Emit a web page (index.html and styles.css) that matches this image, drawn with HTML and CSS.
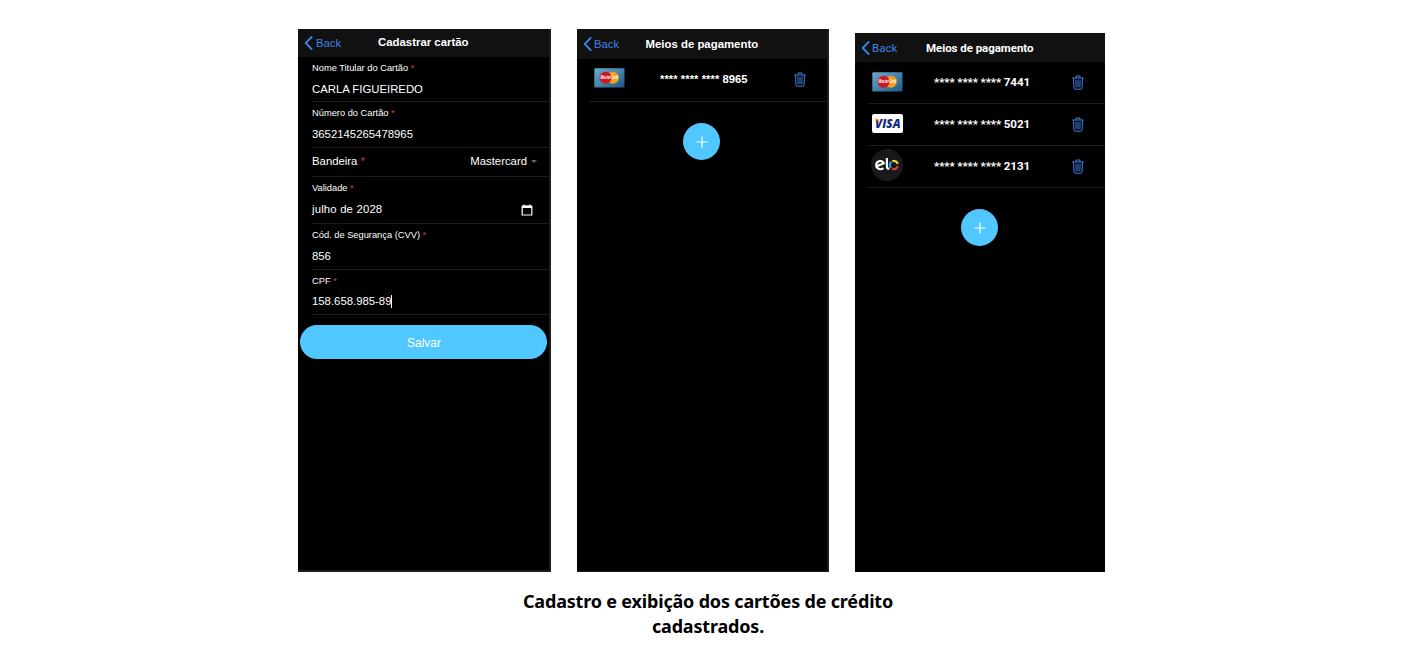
FILE: index.html
```html
<!DOCTYPE html>
<html lang="pt-BR">
<head>
<meta charset="utf-8">
<title>Cadastro de cartões</title>
<link rel="stylesheet" href="styles.css">
</head>
<body>
<svg class="defs" width="0" height="0" aria-hidden="true">
  <defs>
    <linearGradient id="card-blue" x1="0" y1="0" x2="1" y2="1">
      <stop offset="0" stop-color="#6aa9cb"/>
      <stop offset="0.5" stop-color="#4584ac"/>
      <stop offset="1" stop-color="#1f587f"/>
    </linearGradient>
    <symbol id="chevron" viewBox="0 0 9 14"><path d="M7.6 1 L1.7 7 L7.6 13" fill="none" stroke="#3f82e6" stroke-width="1.8" stroke-linecap="round" stroke-linejoin="round"/></symbol>
    <symbol id="trash" viewBox="0 0 12 15"><path d="M0.3 3 H11.7 M4 3 V1 H8 V3 M1.4 3 L2 13 Q2.1 14.2 3.3 14.2 H8.7 Q9.9 14.2 10 13 L10.6 3 M3.9 4.6 L4.1 12.4 M6 4.6 V12.4 M8.1 4.6 L7.9 12.4" fill="none" stroke="#3f7de0" stroke-width="1" stroke-linejoin="round"/></symbol>
    <symbol id="plus" viewBox="0 0 12 12"><path d="M6 0.5 V11.5 M0.5 6 H11.5" fill="none" stroke="#fff" stroke-width="1.2"/></symbol>
    <symbol id="mastercard" viewBox="0 0 31 20">
      <rect x="0.3" y="0.3" width="30.2" height="19.2" rx="1.2" fill="url(#card-blue)"/>
      <circle cx="18.8" cy="9.7" r="6" fill="#f6a01f"/>
      <circle cx="11.6" cy="9.7" r="6" fill="#cf1820"/>
      <text x="15.2" y="11.3" text-anchor="middle" textLength="17.5" lengthAdjust="spacingAndGlyphs" class="mc-word">MasterCard</text>
    </symbol>
    <symbol id="elo" viewBox="0 0 32 32">
      <circle cx="16" cy="16" r="16" fill="#19191c"/>
      <g fill="none" stroke-width="2.2">
        <path d="M5.2 17.4 L12.9 14.2 A4.1 4.1 0 1 0 12.3 18.9" stroke="#fff" stroke-linejoin="round"/>
        <path d="M15.9 9 V17.8 Q16 20 18.2 19.6" stroke="#fff"/>
        <path d="M20.1 19 A4.1 4.1 0 0 1 20.3 12.8" stroke="#28a3df"/>
        <path d="M21.2 12.2 A4.1 4.1 0 0 1 26.8 15" stroke="#f4d02b"/>
        <path d="M26.8 17 A4.1 4.1 0 0 1 21.3 19.8" stroke="#e13b34"/>
      </g>
    </symbol>
  </defs>
</svg>
<main class="board">
  <div class="phones">
    <section class="phone phone-form">
      <header class="bar"><a class="back"><svg class="chev"><use href="#chevron"/></svg><span>Back</span></a><h2 class="title">Cadastrar cartão</h2></header>
      <div class="fields">
        <div class="field f1"><label>Nome Titular do Cartão <i>*</i></label><p>CARLA FIGUEIREDO</p></div>
        <div class="field f2"><label>Número do Cartão <i>*</i></label><p>3652145265478965</p></div>
        <div class="field select"><p>Bandeira <i>*</i></p><p class="choice">Mastercard<span class="caret"></span></p></div>
        <div class="field f4"><label>Validade <i>*</i></label><p class="date">julho de 2028</p>
          <svg class="cal" viewBox="0 0 12 12"><path d="M1.2 2.4 H10.8 V11 H1.2 Z" fill="none" stroke="#fff" stroke-width="1.2"/><path d="M1 1.6 H11 V4 H1 Z M2.6 0.4 H3.8 V2 H2.6 Z M8.2 0.4 H9.4 V2 H8.2 Z" fill="#fff"/></svg></div>
        <div class="field f5"><label>Cód. de Segurança (CVV) <i>*</i></label><p>856</p></div>
        <div class="field f6"><label>CPF <i>*</i></label><p class="typing">158.658.985-89<span class="cursor"></span></p></div>
      </div>
      <button class="save">Salvar</button>
    </section>
    <section class="phone phone-one">
      <header class="bar"><a class="back"><svg class="chev"><use href="#chevron"/></svg><span>Back</span></a><h2 class="title">Meios de pagamento</h2></header>
      <div class="cards">
        <div class="card"><span class="brand"><svg class="mc"><use href="#mastercard"/></svg></span><span class="num"><span class="stars">**** **** ****</span><span class="digits">8965</span></span><svg class="trash"><use href="#trash"/></svg></div>
      </div>
      <button class="add"><svg><use href="#plus"/></svg></button>
    </section>
    <section class="phone phone-many">
      <header class="bar"><a class="back"><svg class="chev"><use href="#chevron"/></svg><span>Back</span></a><h2 class="title">Meios de pagamento</h2></header>
      <div class="cards">
        <div class="card"><span class="brand"><svg class="mc"><use href="#mastercard"/></svg></span><span class="num"><span class="stars">**** **** ****</span><span class="digits">7441</span></span><svg class="trash"><use href="#trash"/></svg></div>
        <div class="card"><span class="brand"><svg class="visa" viewBox="0 0 31 19"><rect width="31" height="19" rx="2" fill="#fff"/><text x="3" y="13.8" textLength="25.5" lengthAdjust="spacingAndGlyphs">VISA</text><path d="M2.6 4.8 H6.6 L7.6 8.6 Q5.6 6 2.6 5.2 Z" fill="#eaa12c"/></svg></span><span class="num"><span class="stars">**** **** ****</span><span class="digits">5021</span></span><svg class="trash"><use href="#trash"/></svg></div>
        <div class="card"><span class="brand"><svg class="elo" role="img" aria-label="elo"><use href="#elo"/></svg></span><span class="num"><span class="stars">**** **** ****</span><span class="digits">2131</span></span><svg class="trash"><use href="#trash"/></svg></div>
      </div>
      <button class="add"><svg><use href="#plus"/></svg></button>
    </section>
  </div>
  <p class="caption">Cadastro e exibição dos cartões de crédito<br>cadastrados.</p>
</main>
</body>
</html>
```

FILE: styles.css
```css
* { box-sizing: border-box; }
body { margin: 0; background: #fff; font-family: "Liberation Sans", Arial, sans-serif; color: #fff; }
p, h2 { margin: 0; }
.defs { display: block; height: 0; }
.board { height: 672px; overflow: hidden; padding-top: 29px; }
.phones { display: flex; align-items: flex-end; gap: 26px; padding-left: 298px; height: 543px; }
.phone { background: #000; height: 543px; flex: none; display: flex; flex-direction: column; }
.phone-form { width: 253px; border-right: 2px solid #1d1d1d; border-bottom: 2px solid #1d1d1d; }
.phone-one { width: 252px; border-right: 2px solid #1d1d1d; border-bottom: 1px solid #1d1d1d; }
.phone-many { width: 250px; height: 539px; font-family: Roboto, sans-serif; }

.bar { background: #111; height: 28px; display: flex; align-items: center; flex: none; }
.phone-form .title { padding-bottom: 2px; }
.phone-one .bar { height: 30px; }
.phone-many .bar { height: 29px; }
.back { display: flex; align-items: center; gap: 3px; width: 80px; padding-left: 6px; color: #3f82e6; font-size: 11.3px; }
.phone-one .back { width: 68.5px; gap: 2px; }
.phone-many .back { width: 71px; gap: 2px; font-size: 11.5px; }
.chev { width: 9px; height: 14px; }
.title { font-size: 11.4px; font-weight: 700; white-space: nowrap; line-height: 14px; }
.phone-many .title { font-size: 11.5px; letter-spacing: -0.05px; }

.fields { margin-left: 14px; }
.field { position: relative; border-bottom: 1px solid #1c1c1c; font-size: 11.35px; line-height: 14px; height: 46px; }
.field label { display: block; font-size: 9.3px; line-height: 12px; padding-top: 5px; white-space: nowrap; }
.field p { padding-top: 9px; line-height: 13px; white-space: nowrap; }
.field i { color: #c8404c; font-style: normal; }
.f1 { height: 45px; }
.select { height: 29px; display: flex; align-items: flex-start; justify-content: space-between; padding-right: 12px; }
.select p { padding-top: 7px; }
.f4 { height: 47px; }
.f6 { height: 45px; }
.date { letter-spacing: 0.17px; }
.choice { display: flex; align-items: center; }
.caret { border: 3px solid transparent; border-top-color: #666; border-bottom: 0; margin-left: 4px; }
.cal { position: absolute; right: 16px; bottom: 7px; width: 12px; height: 12px; }
.field .typing { display: flex; align-items: center; padding-top: 8px; }
.cursor { width: 1px; height: 13px; background: #fff; }
.save { width: 247px; height: 34px; margin: 10px 0 0 2px; border: 0; border-radius: 17px; background: #50c8ff; color: #fff; font: 12px "Liberation Sans", sans-serif; padding: 1px 0 0 1px; }

.cards { margin-left: 13px; }
.card { height: 42px; border-bottom: 1px solid #1c1c1c; display: flex; align-items: center; padding-bottom: 2px; }
.phone-one .card { height: 43px; padding-bottom: 4px; }
.brand { width: 38px; height: 32px; display: flex; align-items: center; justify-content: center; }
.mc { width: 31px; height: 20px; }
.mc-word { font: italic 700 4.6px "Liberation Sans", sans-serif; fill: #fff; }
.elo { width: 32px; height: 32px; margin-top: -2px; }
.visa { width: 31px; height: 19px; margin-top: -1px; }
.visa text { fill: #182d80; font: italic 800 12.3px "Open Sans", sans-serif; }
.num { display: flex; gap: 3px; width: 134px; margin-left: 32px; font-size: 11.3px; font-weight: 700; }
.phone-one .num { padding-top: 1px; }
.phone-one .stars { font-size: 11.1px; letter-spacing: 0.1px; }
.phone-many .num { margin-left: 28px; width: 138px; gap: 2.5px; font-size: 11.6px; }
.phone-many .stars { letter-spacing: -0.13px; }
.trash { width: 12px; height: 15px; margin-top: 2px; }
.add { width: 37px; height: 37px; border: 0; border-radius: 50%; background: #50c8ff; display: flex; align-items: center; justify-content: center; margin: 21px 0 0 106px; padding: 0; }
.add svg { width: 12px; height: 12px; }

.caption { color: #000; font: 700 18px/25px "Noto Sans", sans-serif; letter-spacing: -0.18px; text-align: center; padding-top: 17px; }
```
